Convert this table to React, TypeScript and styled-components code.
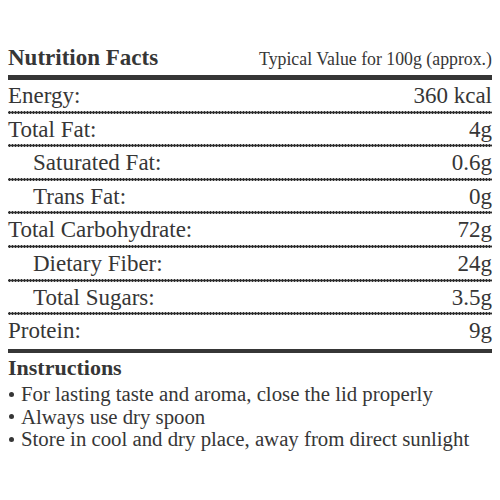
import React from "react";
import styled, { createGlobalStyle } from "styled-components";

const GlobalStyle = createGlobalStyle`
  html, body {
    margin: 0;
    padding: 0;
    background: #ffffff;
  }
  body {
    font-family: "Liberation Serif", "DejaVu Serif", serif;
    color: #363636;
  }
`;

const Panel = styled.div`
  width: 484px;
  padding: 44px 8px 0 8px;
`;

const Header = styled.div`
  display: flex;
  justify-content: space-between;
  align-items: baseline;
  padding-bottom: 2px;
  border-bottom: 5px solid #363636;
`;

const Title = styled.h1`
  margin: 0;
  font-size: 23px;
  line-height: 28px;
  font-weight: 700;
`;

const Subtitle = styled.span`
  font-size: 17.8px;
  line-height: 28px;
`;

const Row = styled.div<{ $last?: boolean }>`
  display: flex;
  justify-content: space-between;
  align-items: flex-start;
  box-sizing: border-box;
  height: 33.6px;
  font-size: 23px;
  line-height: 31.5px;
  background: ${({ $last }) =>
    $last
      ? "none"
      : "radial-gradient(circle, #2e2e2e 1.15px, rgba(46,46,46,0) 1.6px) left bottom / 3px 3px repeat-x"};
`;

const Label = styled.span<{ $indent?: boolean }>`
  padding-left: ${({ $indent }) => ($indent ? "25px" : "0")};
`;

const Value = styled.span``;

const Rule = styled.div`
  height: 4px;
  background: #363636;
`;

const SectionTitle = styled.h2`
  margin: 2.6px 0 1.7px 0;
  font-size: 22px;
  line-height: 26px;
  font-weight: 700;
`;

const List = styled.ul`
  list-style: none;
  margin: 0;
  padding: 0;
`;

const Item = styled.li`
  display: flex;
  align-items: center;
  gap: 7px;
  font-size: 20.8px;
  line-height: 22.5px;
`;

const Bullet = styled.span`
  width: 5px;
  height: 5px;
  margin-left: 1px;
  border-radius: 50%;
  background: #363636;
  flex-shrink: 0;
`;

const rows = [
  { label: "Energy:", value: "360 kcal" },
  { label: "Total Fat:", value: "4g" },
  { label: "Saturated Fat:", value: "0.6g", indent: true },
  { label: "Trans Fat:", value: "0g", indent: true },
  { label: "Total Carbohydrate:", value: "72g" },
  { label: "Dietary Fiber:", value: "24g", indent: true },
  { label: "Total Sugars:", value: "3.5g", indent: true },
  { label: "Protein:", value: "9g" },
];

const instructions = [
  "For lasting taste and aroma, close the lid properly",
  "Always use dry spoon",
  "Store in cool and dry place, away from direct sunlight",
];

const App: React.FC = () => {
  return (
    <>
      <GlobalStyle />
      <Panel>
        <Header>
          <Title>Nutrition Facts</Title>
          <Subtitle>Typical Value for 100g (approx.)</Subtitle>
        </Header>
        {rows.map((r, i) => (
          <Row key={r.label} $last={i === rows.length - 1}>
            <Label $indent={r.indent}>{r.label}</Label>
            <Value>{r.value}</Value>
          </Row>
        ))}
        <Rule />
        <SectionTitle>Instructions</SectionTitle>
        <List>
          {instructions.map((text) => (
            <Item key={text}>
              <Bullet />
              <span>{text}</span>
            </Item>
          ))}
        </List>
      </Panel>
    </>
  );
};

export default App;
